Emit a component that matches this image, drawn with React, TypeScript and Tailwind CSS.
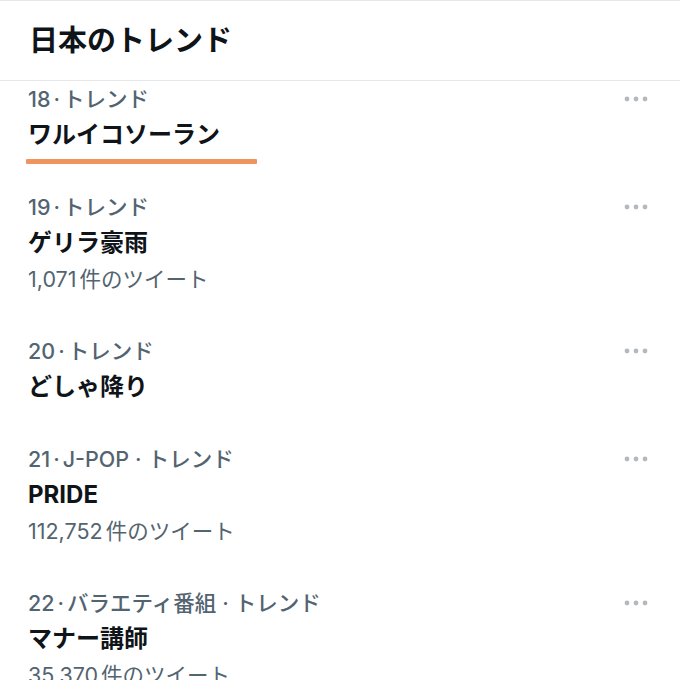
import { Fragment } from 'react';

type Trend = {
  rank: number;
  tags: string[];
  title: string;
  count?: string;
  marked?: boolean;
};

const trends: Trend[] = [
  { rank: 18, tags: ['トレンド'], title: 'ワルイコソーラン', marked: true },
  { rank: 19, tags: ['トレンド'], title: 'ゲリラ豪雨', count: '1,071' },
  { rank: 20, tags: ['トレンド'], title: 'どしゃ降り' },
  { rank: 21, tags: ['J-POP', 'トレンド'], title: 'PRIDE', count: '112,752' },
  { rank: 22, tags: ['バラエティ番組', 'トレンド'], title: 'マナー講師', count: '35,370' },
];

const MoreDots = () => (
  <svg width="24" height="6" viewBox="0 0 24 6" className="text-[#b4b9be]">
    <circle cx="3" cy="3" r="2.4" fill="currentColor" />
    <circle cx="12" cy="3" r="2.4" fill="currentColor" />
    <circle cx="21" cy="3" r="2.4" fill="currentColor" />
  </svg>
);

const TrendRow = ({ trend }: { trend: Trend }) => (
  <div className="relative pb-[36px] pl-[28px] pr-[32px]">
    <div className="flex h-[36px] items-center justify-between">
      <div className="text-[21.5px] font-medium leading-[36px] text-[#536471]">
        {trend.rank}
        <span className="mx-[3px]">·</span>
        {trend.tags.map((tag, i) => (
          <Fragment key={tag}>
            {i > 0 && <span className="mx-[6px]">·</span>}
            {tag}
          </Fragment>
        ))}
      </div>
      <MoreDots />
    </div>
    <div className="h-[36px] text-[24px] font-bold leading-[36px] text-[#0f1419]">{trend.title}</div>
    {trend.count && (
      <div className="h-[36px] text-[21.5px] leading-[36px] text-[#536471]">
        {trend.count}
        <span className="ml-[3px]">件のツイート</span>
      </div>
    )}
    {/* 手書きの下線 */}
    {trend.marked && (
      <div className="absolute left-[26px] top-[78px] h-[5px] w-[231px] rounded-[1px] bg-[#f0935e]" />
    )}
  </div>
);

export default function App() {
  return (
    <div
      className="h-[680px] w-[680px] overflow-hidden bg-white"
      style={{ fontFamily: 'Inter, "Noto Sans CJK JP", sans-serif' }}
    >
      <div className="flex h-[81px] items-center border-t border-b border-[#e6e8ea] pl-[29px]">
        <h1 className="text-[29px] font-bold text-[#0f1419]">日本のトレンド</h1>
      </div>
      {trends.map((t) => (
        <TrendRow key={t.rank} trend={t} />
      ))}
    </div>
  );
}
